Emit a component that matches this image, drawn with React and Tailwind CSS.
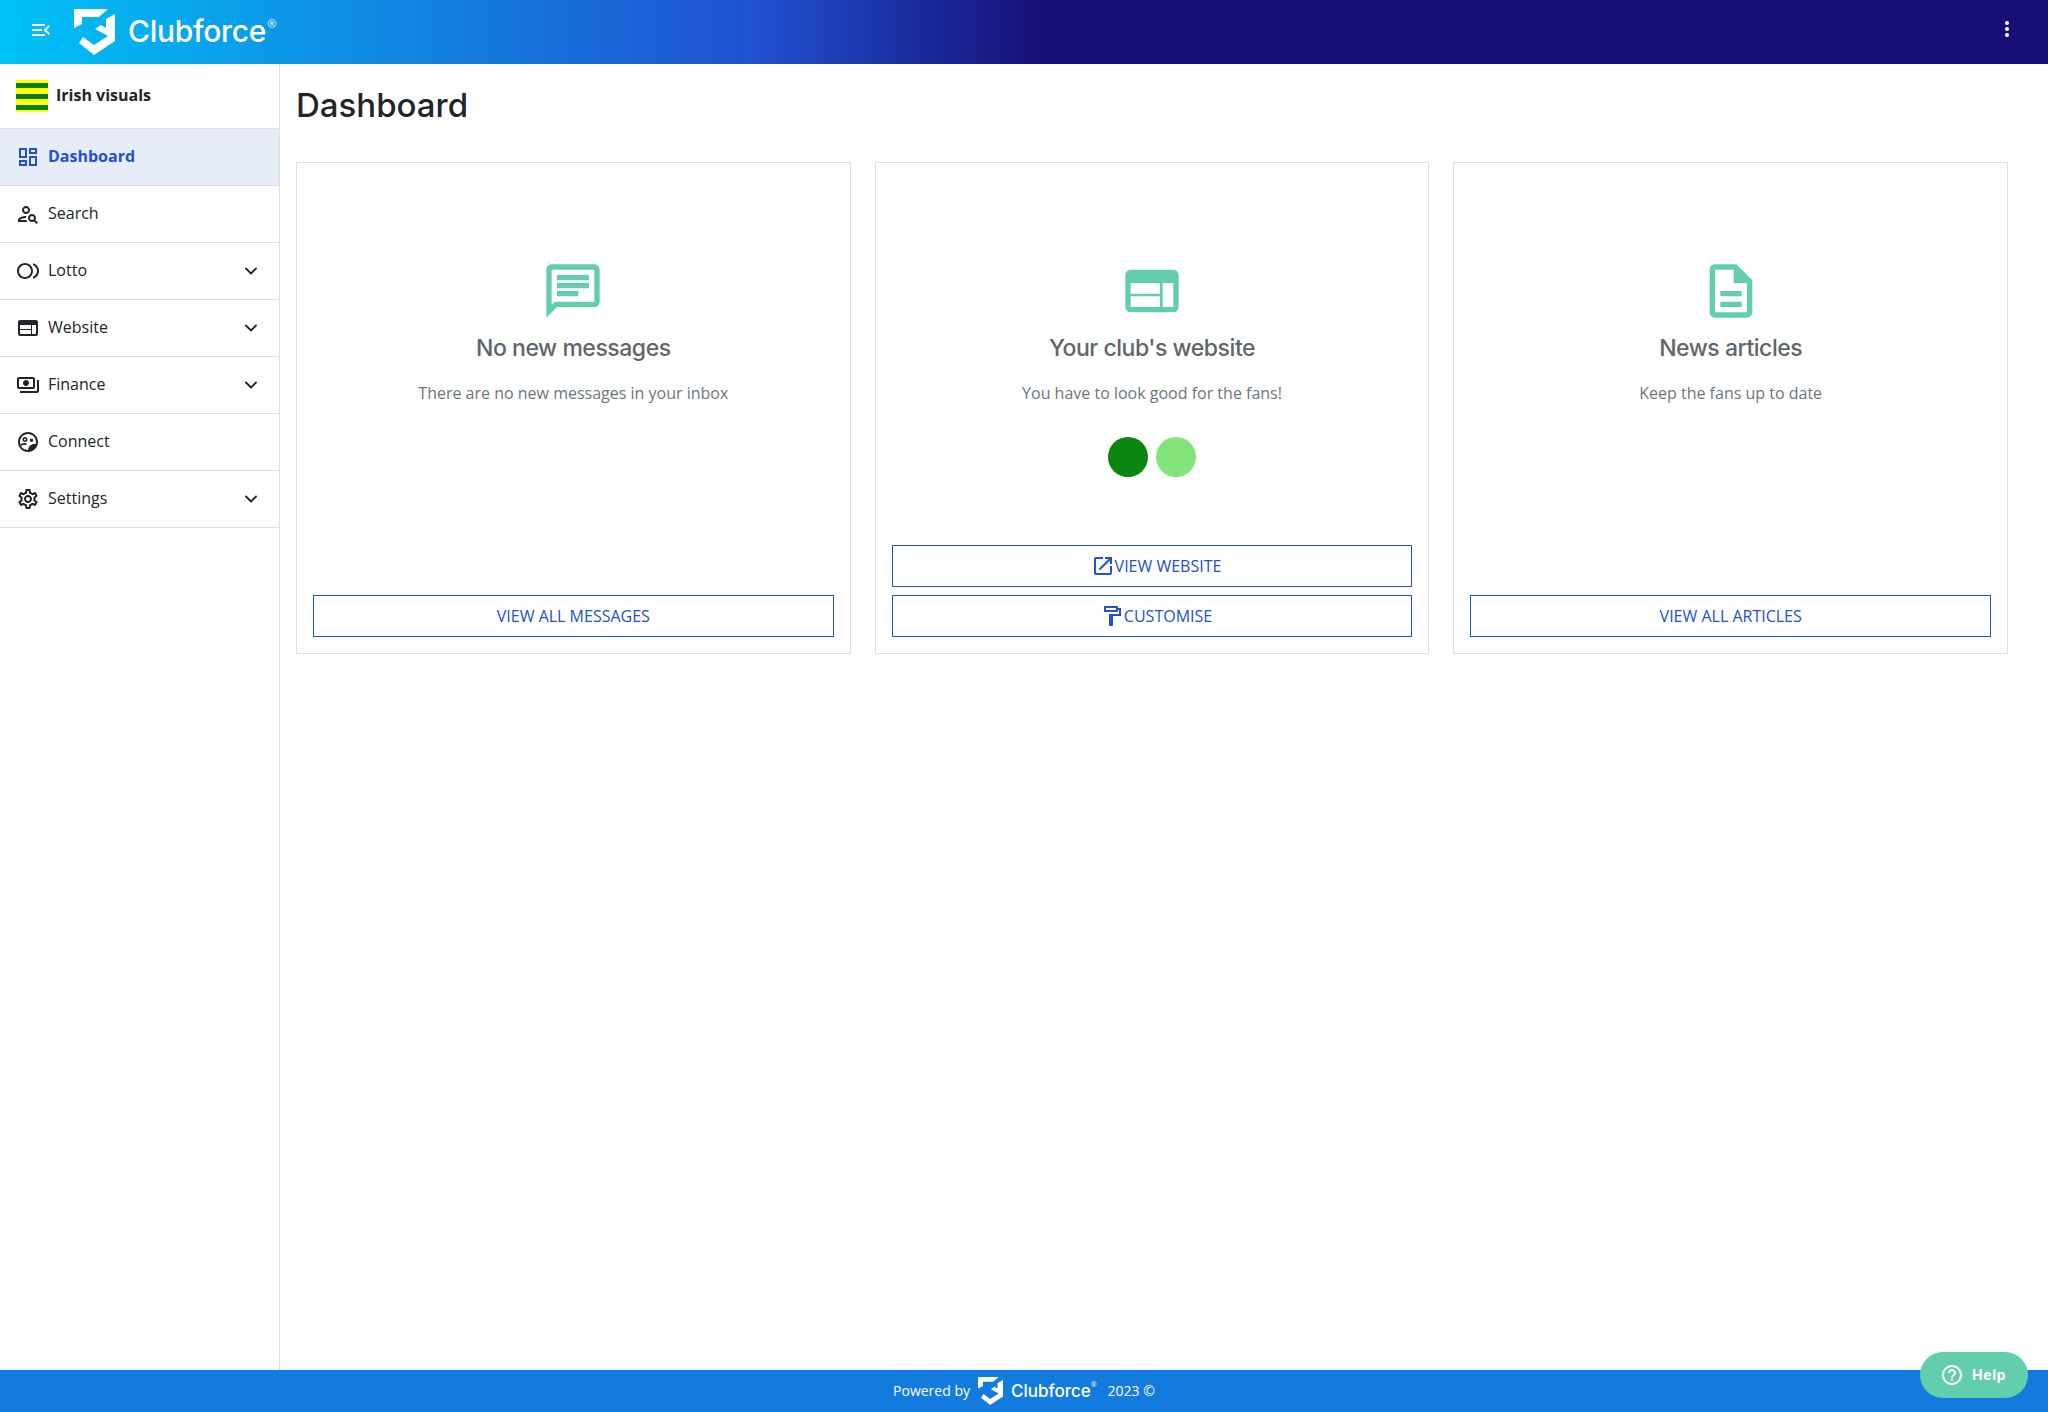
import React from 'react';
import { ChevronDown } from 'lucide-react';

const ICONS = {
  dashboard: 'M19 5v2h-4V5h4M9 5v6H5V5h4m10 8v6h-4v-6h4M9 17v2H5v-2h4M21 3h-8v6h8V3zM11 3H3v10h8V3zm10 8h-8v10h8V11zm-10 4H3v6h8v-6z',
  search: 'M10 12c2.21 0 4-1.79 4-4s-1.79-4-4-4-4 1.79-4 4 1.79 4 4 4zm0-6c1.1 0 2 .9 2 2s-.9 2-2 2-2-.9-2-2 .9-2 2-2zM4 18c.22-.72 3.31-2 6-2 0-.7.13-1.37.35-1.99C7.62 13.91 2 15.27 2 18v2h9.54c-.52-.58-.93-1.25-1.19-2H4zM19.43 18.02c.36-.59.57-1.28.57-2.02 0-2.21-1.79-4-4-4s-4 1.79-4 4 1.79 4 4 4c.74 0 1.43-.22 2.02-.57L20.59 22 22 20.59c-1.5-1.5-.79-.8-2.57-2.57zM16 18c-1.1 0-2-.9-2-2s.9-2 2-2 2 .9 2 2-.9 2-2 2z',
  lotto: 'M15 4c-4.42 0-8 3.58-8 8s3.58 8 8 8 8-3.58 8-8-3.58-8-8-8zm0 14c-3.31 0-6-2.69-6-6s2.69-6 6-6 6 2.69 6 6-2.69 6-6 6zM3 12c0-2.61 1.67-4.83 4-5.65V4.26C3.55 5.15 1 8.27 1 12s2.55 6.85 6 7.74v-2.09c-2.33-.82-4-3.04-4-5.65z',
  finance: 'M19 14V6c0-1.1-.9-2-2-2H3c-1.1 0-2 .9-2 2v8c0 1.1.9 2 2 2h14c1.1 0 2-.9 2-2zm-2 0H3V6h14v8zm-7-7c-1.66 0-3 1.34-3 3s1.34 3 3 3 3-1.34 3-3-1.34-3-3-3zm13 0v11c0 1.1-.9 2-2 2H4v-2h17V7h2z',
  connect: 'M12 2C6.48 2 2 6.48 2 12s4.48 10 10 10 10-4.48 10-10S17.52 2 12 2zm0 18c-4.41 0-8-3.59-8-8s3.59-8 8-8 8 3.59 8 8c0 .7-.09 1.38-.26 2.03-2.5-.4-6.74.2-7.74 5.97zM9 7a2.5 2.5 0 1 0 0 5 2.5 2.5 0 0 0 0-5zm0 3.4a.9.9 0 1 1 0-1.8.9.9 0 0 1 0 1.8zM15.5 8.5a1.7 1.7 0 1 0 0 3.4 1.7 1.7 0 0 0 0-3.4zM4.5 14.5c1-1 3-1.5 4.5-1.5.6 0 1.3.1 2 .3l-1 1.6c-.3 0-.7-.1-1-.1-1 0-2.4.3-3.5.9z',
  settings: 'M19.43 12.98c.04-.32.07-.64.07-.98 0-.34-.03-.66-.07-.98l2.11-1.65c.19-.15.24-.42.12-.64l-2-3.46c-.09-.16-.26-.25-.44-.25-.06 0-.12.01-.17.03l-2.49 1c-.52-.4-1.08-.73-1.69-.98l-.38-2.65C14.46 2.18 14.25 2 14 2h-4c-.25 0-.46.18-.49.42l-.38 2.65c-.61.25-1.17.59-1.69.98l-2.49-1c-.06-.02-.12-.03-.18-.03-.17 0-.34.09-.43.25l-2 3.46c-.13.22-.07.49.12.64l2.11 1.65c-.04.32-.07.65-.07.98 0 .33.03.66.07.98l-2.11 1.65c-.19.15-.24.42-.12.64l2 3.46c.09.16.26.25.44.25.06 0 .12-.01.17-.03l2.49-1c.52.4 1.08.73 1.69.98l.38 2.65c.03.24.24.42.49.42h4c.25 0 .46-.18.49-.42l.38-2.65c.61-.25 1.17-.59 1.69-.98l2.49 1c.06.02.12.03.18.03.17 0 .34-.09.43-.25l2-3.46c.12-.22.07-.49-.12-.64l-2.11-1.65zm-1.98-1.71c.04.31.05.52.05.73 0 .21-.02.43-.05.73l-.14 1.13.89.7 1.08.84-.7 1.21-1.27-.51-1.04-.42-.9.68c-.43.32-.84.56-1.25.73l-1.06.43-.16 1.13-.2 1.35h-1.4l-.19-1.35-.16-1.13-1.06-.43c-.43-.18-.83-.41-1.23-.71l-.91-.7-1.06.43-1.27.51-.7-1.21 1.08-.84.89-.7-.14-1.13c-.03-.31-.05-.54-.05-.74s.02-.43.05-.73l.14-1.13-.89-.7-1.08-.84.7-1.21 1.27.51 1.04.42.9-.68c.43-.32.84-.56 1.25-.73l1.06-.43.16-1.13.2-1.35h1.39l.19 1.35.16 1.13 1.06.43c.43.18.83.41 1.23.71l.91.7 1.06-.43 1.27-.51.7 1.21-1.07.85-.89.7.14 1.13zM12 8c-2.21 0-4 1.79-4 4s1.79 4 4 4 4-1.79 4-4-1.79-4-4-4zm0 6c-1.1 0-2-.9-2-2s.9-2 2-2 2 .9 2 2-.9 2-2 2z',
  menuOpen: 'M3 18h13v-2H3v2zm0-5h10v-2H3v2zm0-7v2h13V6H3zm18 9.59L17.42 12 21 8.41 19.59 7l-5 5 5 5L21 15.59z',
  chat: 'M20 2H4c-1.1 0-2 .9-2 2v18l4-4h14c1.1 0 2-.9 2-2V4c0-1.1-.9-2-2-2zm0 14H5.17L4 17.17V4h16v12zM6 12h8v2H6zM6 9h12v2H6zM6 6h12v2H6z',
  web: 'M20 4H4c-1.1 0-1.99.9-1.99 2L2 18c0 1.1.9 2 2 2h16c1.1 0 2-.9 2-2V6c0-1.1-.9-2-2-2zm-5 14H4v-4h11v4zm0-5H4V9h11v4zm5 5h-4V9h4v9z',
  doc: 'M14 2H6c-1.1 0-1.99.9-1.99 2L4 20c0 1.1.89 2 1.99 2H18c1.1 0 2-.9 2-2V8l-6-6zm4 18H6V4h7v5h5v11zM8 16h8v2H8zM8 12h8v2H8z',
  open: 'M19 19H5V5h7V3H5c-1.11 0-2 .9-2 2v14c0 1.1.89 2 2 2h14c1.1 0 2-.9 2-2v-7h-2v7zM14 3v2h3.59l-9.83 9.83 1.41 1.41L19 6.41V10h2V3h-7z',
  paint: 'M18 4V3c0-.55-.45-1-1-1H5c-.55 0-1 .45-1 1v4c0 .55.45 1 1 1h12c.55 0 1-.45 1-1V6h1v4H9v11c0 .55.45 1 1 1h2c.55 0 1-.45 1-1v-9h8V4h-3zm-2 2H6V4h10v2z',
  help: 'M11 18h2v-2h-2v2zm1-16C6.48 2 2 6.48 2 12s4.48 10 10 10 10-4.48 10-10S17.52 2 12 2zm0 18c-4.41 0-8-3.59-8-8s3.59-8 8-8 8 3.59 8 8-3.59 8-8 8zm0-14c-2.21 0-4 1.79-4 4h2c0-1.1.9-2 2-2s2 .9 2 2c0 2-3 1.75-3 5h2c0-2.25 3-2.5 3-5 0-2.21-1.79-4-4-4z',
};

const NAV = [
  { name: 'Dashboard', icon: 'dashboard', active: true },
  { name: 'Search', icon: 'search' },
  { name: 'Lotto', icon: 'lotto', caret: true, mirror: true },
  { name: 'Website', icon: 'web', caret: true },
  { name: 'Finance', icon: 'finance', caret: true },
  { name: 'Connect', icon: 'connect' },
  { name: 'Settings', icon: 'settings', caret: true },
];

function Icon({ name, className }) {
  return (
    <svg viewBox="0 0 24 24" fill="currentColor" className={className}>
      <path d={ICONS[name]} />
    </svg>
  );
}

function Shield({ className }) {
  return (
    <svg viewBox="0 0 41 46" fill="white" className={className}>
      <path d="M0 0H34L25 8H8V15L0 19Z" />
      <path d="M41 5V32L20 46 5 34 9 28 20 36 34 27 21 20 27 16 32 19V10Z" />
    </svg>
  );
}

function Card({ icon, title, text, children, actions }) {
  return (
    <div className="flex-1 h-[492px] border border-[#dedede] flex flex-col items-center px-4 pb-4">
      <Icon name={icon} className="w-16 h-16 mt-[96px] text-[#62ceae]" />
      <h2 className="mt-[9px] text-[23px] leading-8 font-medium text-[#5f656b] font-['Inter','Lato',sans-serif] tracking-[-0.02em]">{title}</h2>
      <p className="mt-[17px] text-base leading-6 text-[#6c757d]">{text}</p>
      {children}
      <div className="mt-auto w-full flex flex-col gap-2">{actions}</div>
    </div>
  );
}

function OutlineButton({ icon, children }) {
  return (
    <button className={`w-full h-[42px] border border-[#2250cf] text-[#2250cf] text-base flex items-center justify-center ${icon ? 'pl-2' : ''}`}>
      {icon && <Icon name={icon} className="w-6 h-6" />}
      {children}
    </button>
  );
}

export default function App() {
  return (
    <div className="h-[1412px] flex flex-col bg-white font-['Open_Sans',sans-serif] overflow-hidden relative">
      {/* top bar */}
      <header className="h-16 shrink-0 flex items-center bg-[linear-gradient(90deg,#00c2f5_0%,#2050d0_37%,#170f75_51%,#170f75_100%)] text-white">
        <Icon name="menuOpen" className="w-6 h-6 ml-[29px] mb-[5px]" />
        <Shield className="w-[41px] h-[46px] ml-[21px]" />
        <span className="ml-[13px] pb-[2px] text-[30px] font-medium font-['Inter','Lato',sans-serif] tracking-[-0.01em]">Clubforce</span>
        <span className="text-[11px] self-start mt-[16px] ml-[1px]">®</span>
        <div className="ml-auto mr-[39px] mb-[6px] flex flex-col gap-[2px]">
          <span className="w-1 h-1 bg-white rounded-full" />
          <span className="w-1 h-1 bg-white rounded-full" />
          <span className="w-1 h-1 bg-white rounded-full" />
        </div>
      </header>

      <div className="flex-1 flex min-h-0">
        {/* sidebar */}
        <aside className="w-[280px] shrink-0 border-r border-[#dedede]">
          <div className="h-[65px] flex items-center pl-4 border-b border-[#dee2e6]">
            <div className="w-8 h-8 bg-[#ffff00] flex flex-col justify-center gap-[6px]">
              <span className="h-[5px] bg-[#0a7d0a]" />
              <span className="h-[5px] bg-[#0a7d0a]" />
              <span className="h-[5px] bg-[#0a7d0a]" />
            </div>
            <span className="ml-2 pb-[2px] text-base font-bold text-[#212529]">Irish visuals</span>
          </div>
          {NAV.map((item) => (
            <div
              key={item.name}
              className={`h-[57px] flex items-center border-b border-[#dedede] pl-4 pr-[18px] text-base ${item.active ? 'bg-[#e6ecf8] text-[#2250cf] font-bold' : 'text-[#212529]'}`}
            >
              <Icon name={item.icon} className={`w-6 h-6 shrink-0 ${item.mirror ? '-scale-x-100' : ''}`} />
              <span className="ml-2 pb-[2px]">{item.name}</span>
              {item.caret && <ChevronDown className="w-5 h-5 ml-auto" strokeWidth={2.2} />}
            </div>
          ))}
        </aside>

        {/* main */}
        <main className="flex-1 pl-4 pr-10">
          <h1 className="mt-[16px] h-[50px] text-[33px] leading-[50px] font-medium text-[#212529] font-['Inter','Lato',sans-serif]">Dashboard</h1>
          <div className="mt-[32px] flex gap-6">
            <Card
              icon="chat"
              title="No new messages"
              text="There are no new messages in your inbox"
              actions={<OutlineButton>VIEW ALL MESSAGES</OutlineButton>}
            />
            <Card
              icon="web"
              title="Your club's website"
              text="You have to look good for the fans!"
              actions={
                <>
                  <OutlineButton icon="open">VIEW WEBSITE</OutlineButton>
                  <OutlineButton icon="paint">CUSTOMISE</OutlineButton>
                </>
              }
            >
              <div className="mt-[32px] flex gap-2">
                <span className="w-10 h-10 rounded-full bg-[#0a850f]" />
                <span className="w-10 h-10 rounded-full bg-[#84e37b]" />
              </div>
            </Card>
            <Card
              icon="doc"
              title="News articles"
              text="Keep the fans up to date"
              actions={<OutlineButton>VIEW ALL ARTICLES</OutlineButton>}
            />
          </div>
        </main>
      </div>

      {/* footer */}
      <footer className="h-[42px] shrink-0 bg-[#147bde] text-white flex items-center justify-center text-sm">
        <span>Powered by</span>
        <Shield className="ml-2 w-[25px] h-[28px]" />
        <span className="ml-2 text-[17px] font-medium font-['Inter','Lato',sans-serif]">Clubforce</span>
        <span className="text-[7px] self-start mt-[10px]">®</span>
        <span className="ml-[11px]">2023 ©</span>
      </footer>

      {/* help button sits over the footer */}
      <button className="absolute left-[1920px] top-[1352px] w-[108px] h-[46px] rounded-full bg-[#62ceae] text-white flex items-center justify-center gap-2 pr-[2px] text-[15px] font-bold font-['Roboto',sans-serif] tracking-wider">
        <Icon name="help" className="w-6 h-6" />
        Help
      </button>
    </div>
  );
}
